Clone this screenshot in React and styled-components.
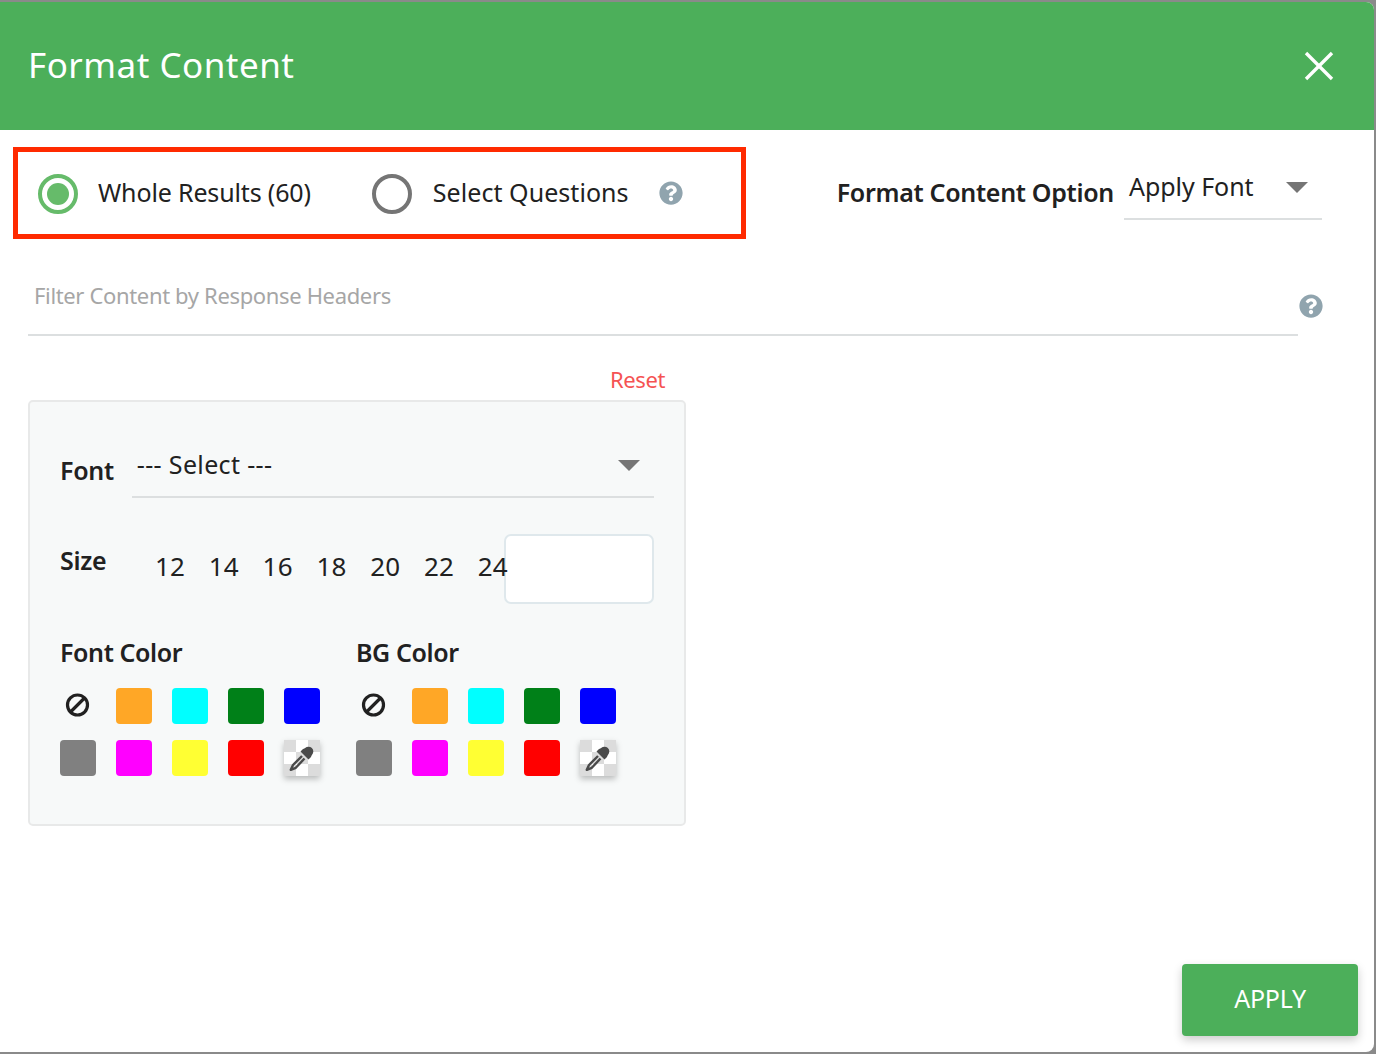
import React from 'react';
import styled, { createGlobalStyle } from 'styled-components';
import { FaQuestionCircle } from 'react-icons/fa';

const GlobalStyle = createGlobalStyle`
  html, body {
    margin: 0;
    padding: 0;
    height: 100%;
    background: #8a8a8a;
    font-family: "Noto Sans", "Open Sans", sans-serif;
    color: #212121;
  }
  * { box-sizing: border-box; }
`;

const Page = styled.div`
  width: 1376px;
  height: 1054px;
  padding: 2px 2px 2px 0;
  overflow: hidden;
`;

const Dialog = styled.div`
  width: 100%;
  height: 100%;
  background: #fff;
  border-radius: 0 8px 8px 0;
  overflow: hidden;
  display: flex;
  flex-direction: column;
`;

const Header = styled.header`
  height: 128px;
  flex: none;
  background: #4caf5a;
  color: #fff;
  display: flex;
  align-items: center;
  justify-content: space-between;
  padding: 0 40px 0 28px;
`;

const Title = styled.h1`
  margin: 0 0 4px;
  font-size: 35px;
  font-weight: 400;
  letter-spacing: 0.5px;
`;

const CloseIcon = styled.svg`
  width: 30px;
  height: 30px;
  stroke: #fff;
  stroke-width: 3.4;
  display: block;
`;

const Body = styled.main`
  flex: 1;
  display: flex;
  flex-direction: column;
  padding: 17px 52px 0 13px;
`;

const TopRow = styled.div`
  display: flex;
  justify-content: space-between;
`;

const ScopeBox = styled.div`
  width: 733px;
  height: 92px;
  border: 5px solid #ff2a00;
  display: flex;
  align-items: center;
  padding: 0 0 0 20px;
`;

const RadioItem = styled.label`
  display: flex;
  align-items: center;
  gap: ${(p) => p.$inner}px;
  font-size: 25px;
  margin-right: ${(p) => p.$gap}px;
`;

const RadioText = styled.span`
  margin-bottom: 2px;
  letter-spacing: ${(p) => p.$track}px;
`;

const RadioCircle = styled.span`
  width: 40px;
  height: 40px;
  margin-top: 2px;
  border-radius: 50%;
  border: 4px solid ${(p) => (p.$on ? '#66bb6a' : '#757575')};
  display: flex;
  align-items: center;
  justify-content: center;

  &::after {
    content: '';
    width: 22px;
    height: 22px;
    border-radius: 50%;
    background: ${(p) => (p.$on ? '#66bb6a' : 'transparent')};
  }
`;

const HelpIcon = styled(FaQuestionCircle)`
  width: 24px;
  height: 24px;
  color: #90a4ae;
  flex: none;
`;

const OptionGroup = styled.div`
  display: flex;
  align-items: flex-start;
  gap: 10px;
  padding-top: 12px;
`;

const OptionLabel = styled.span`
  font-size: 25px;
  font-weight: 600;
  letter-spacing: -0.3px;
  padding-top: 16px;
`;

const Select = styled.div`
  width: ${(p) => p.$width}px;
  height: ${(p) => p.$height}px;
  border-bottom: 2px solid #dcdfe0;
  display: flex;
  align-items: center;
  justify-content: space-between;
  padding: 0 14px ${(p) => p.$lift}px 5px;
  font-size: 25px;
  letter-spacing: ${(p) => p.$track}px;
`;

const Caret = styled.span`
  width: 0;
  height: 0;
  margin-top: 2px;
  border-left: 11px solid transparent;
  border-right: 11px solid transparent;
  border-top: 11px solid #757575;
`;

const FilterRow = styled.div`
  display: flex;
  align-items: flex-start;
  margin: 28px 0 0 15px;
  gap: 1px;
`;

const FilterField = styled.div`
  flex: none;
  width: 1270px;
  height: 69px;
  padding: 13px 0 0 6px;
  border-bottom: 2px solid #dcdfe0;
  font-size: 22px;
  letter-spacing: -0.35px;
  color: #a6a6a6;
`;

const FilterHelp = styled.div`
  padding-top: 27px;
`;

const Column = styled.div`
  width: 658px;
  margin: 29px 0 0 15px;
  display: flex;
  flex-direction: column;
`;

const ResetLink = styled.a`
  align-self: flex-end;
  margin-right: 21px;
  font-size: 22px;
  letter-spacing: -0.4px;
  line-height: 28px;
  color: #f55353;
`;

const Panel = styled.section`
  margin-top: 7px;
  height: 426px;
  background: #f7f9f9;
  border: 2px solid #e8e9e9;
  border-radius: 5px;
  padding: 30px 30px 0;
`;

const FontRow = styled.div`
  display: flex;
  align-items: flex-start;
  gap: 18px;
`;

const FieldLabel = styled.span`
  font-size: 25px;
  font-weight: 600;
  letter-spacing: -0.3px;
  line-height: 34px;
`;

const FontLabel = styled(FieldLabel)`
  padding-top: 21px;
`;

const SizeRow = styled.div`
  display: flex;
  align-items: center;
  margin-top: 36px;
  height: 70px;
`;

const SizeLabel = styled(FieldLabel)`
  width: 95px;
  padding-bottom: 18px;
  flex: none;
`;

const SizeValue = styled.span`
  width: 53.8px;
  flex: none;
  font-size: 26px;
  letter-spacing: 0.2px;
`;

const SizeList = styled.div`
  position: relative;
  z-index: 1;
  display: flex;
  width: 349px;
  flex: none;
  padding-bottom: 6px;
`;

const SizeInput = styled.input`
  width: 150px;
  height: 70px;
  background: #fff;
  border: 2px solid #dfe8ec;
  border-radius: 7px;
  outline: none;
`;

const ColorColumns = styled.div`
  display: grid;
  grid-template-columns: 296px 260px;
  margin-top: 31px;
`;

const ColorLabel = styled(FieldLabel)`
  display: block;
  letter-spacing: -0.4px;
`;

const SwatchGrid = styled.div`
  display: grid;
  grid-template-columns: repeat(5, 36px);
  column-gap: 20px;
  row-gap: 16px;
  margin-top: 19px;
`;

const Swatch = styled.span`
  width: 36px;
  height: 36px;
  border-radius: 4px;
  background: ${(p) => p.$color};
`;

const NoColor = styled.svg`
  width: 36px;
  height: 36px;
  stroke: #212121;
  stroke-width: 3.2;
  fill: none;
  display: block;
`;

const Picker = styled.span`
  width: 36px;
  height: 36px;
  display: block;
  background: repeating-conic-gradient(#fff 0 25%, #dcdcdc 0 50%) 0 0 / 24px 24px;
  box-shadow: 0 3px 6px rgba(0, 0, 0, 0.25);
`;

const DropperIcon = styled.svg`
  width: 36px;
  height: 36px;
  display: block;
  color: #4a4a4a;
`;

const Footer = styled.footer`
  flex: none;
  display: flex;
  justify-content: flex-end;
  padding: 0 16px 16px 0;
`;

const ApplyButton = styled.button`
  width: 176px;
  height: 72px;
  border: none;
  border-radius: 4px;
  background: #4caf5a;
  color: #fff;
  font-family: inherit;
  font-size: 25px;
  letter-spacing: -0.2px;
  padding: 0 0 4px;
  box-shadow: 0 4px 10px rgba(0, 0, 0, 0.2);
`;

const palette = ['#ffa726', '#00ffff', '#008018', '#0000ff', '#808080', '#ff00ff', '#ffff33', '#ff0000'];
const sizes = [12, 14, 16, 18, 20, 22, 24];

const ColorSet = () => (
  <SwatchGrid>
    <NoColor viewBox="0 0 36 36">
      <circle cx="17.5" cy="17" r="10" />
      <line x1="10.5" y1="24" x2="24.5" y2="10" />
    </NoColor>
    {palette.map((c) => (
      <Swatch key={c} $color={c} />
    ))}
    <Picker>
      <DropperIcon viewBox="0 0 36 36">
        <circle cx="24.500" cy="11.500" r="4.800" fill="currentColor" />
        <path fill="currentColor" d="M16.500 11.500L19 9l3-1 6 6-1 3-2.500 2.500z" />
        <path
          fill="none"
          stroke="currentColor"
          strokeWidth="2.400"
          strokeLinejoin="round"
          d="M18 16L9 25l-2.200 4.800 5-2L20.500 18.500"
        />
      </DropperIcon>
    </Picker>
  </SwatchGrid>
);

export default function App() {
  return (
    <Page>
      <GlobalStyle />
      <Dialog>
        <Header>
          <Title>Format Content</Title>
          <CloseIcon viewBox="0 0 30 30">
            <line x1="2" y1="2" x2="28" y2="28" />
            <line x1="28" y1="2" x2="2" y2="28" />
          </CloseIcon>
        </Header>
        <Body>
          <TopRow>
            <ScopeBox>
              <RadioItem $gap={61} $inner={20}>
                <RadioCircle $on />
                <RadioText $track={-0.15}>Whole Results (60)</RadioText>
              </RadioItem>
              <RadioItem $gap={30} $inner={21}>
                <RadioCircle />
                <RadioText $track={0.05}>Select Questions</RadioText>
              </RadioItem>
              <HelpIcon />
            </ScopeBox>
            <OptionGroup>
              <OptionLabel>Format Content Option</OptionLabel>
              <Select $width={198} $height={61} $lift={5} $track={-0.05}>
                Apply Font
                <Caret />
              </Select>
            </OptionGroup>
          </TopRow>
          <FilterRow>
            <FilterField>Filter Content by Response Headers</FilterField>
            <FilterHelp>
              <HelpIcon />
            </FilterHelp>
          </FilterRow>
          <Column>
            <ResetLink>Reset</ResetLink>
            <Panel>
              <FontRow>
                <FontLabel>Font</FontLabel>
                <Select $width={522} $height={66} $lift={0} $track={0.35}>
                  --- Select ---
                  <Caret />
                </Select>
              </FontRow>
              <SizeRow>
                <SizeLabel>Size</SizeLabel>
                <SizeList>
                  {sizes.map((s) => (
                    <SizeValue key={s}>{s}</SizeValue>
                  ))}
                </SizeList>
                <SizeInput />
              </SizeRow>
              <ColorColumns>
                <div>
                  <ColorLabel>Font Color</ColorLabel>
                  <ColorSet />
                </div>
                <div>
                  <ColorLabel>BG Color</ColorLabel>
                  <ColorSet />
                </div>
              </ColorColumns>
            </Panel>
          </Column>
        </Body>
        <Footer>
          <ApplyButton>APPLY</ApplyButton>
        </Footer>
      </Dialog>
    </Page>
  );
}
